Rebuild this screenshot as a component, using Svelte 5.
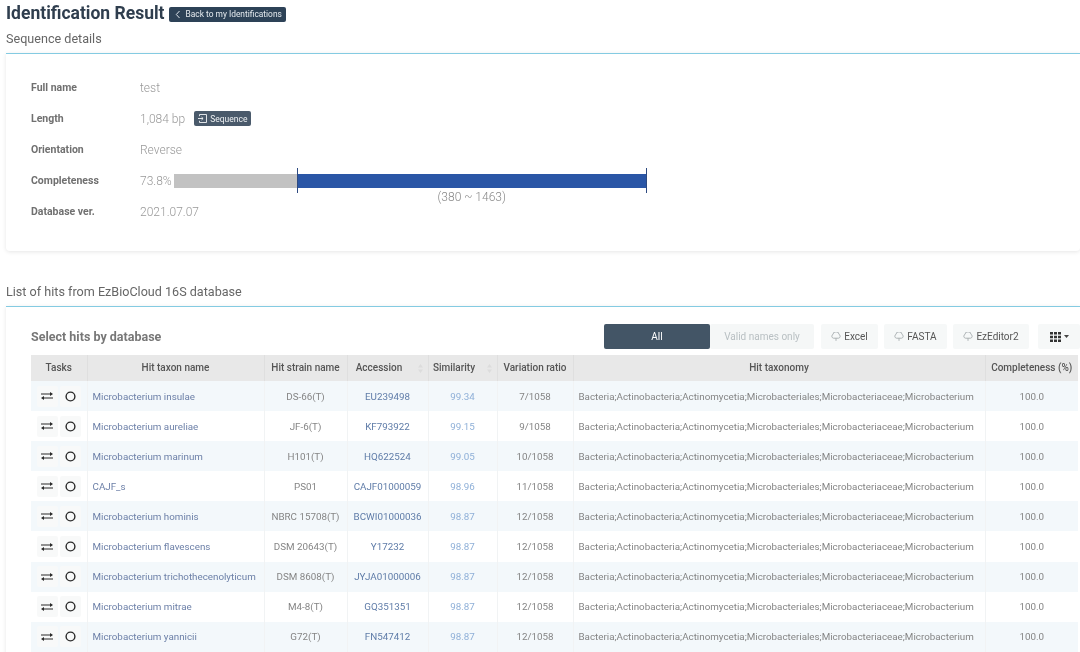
<script>
  const details = [
    { label: 'Full name', value: 'test' },
    { label: 'Length', value: '1,084 bp', button: true },
    { label: 'Orientation', value: 'Reverse' },
    { label: 'Completeness', value: '73.8%', bar: true },
    { label: 'Database ver.', value: '2021.07.07' }
  ];
  const columns = [
    { t: 'Tasks' }, { t: 'Hit taxon name' }, { t: 'Hit strain name' }, { t: 'Accession', sort: true },
    { t: 'Similarity', sort: true }, { t: 'Variation ratio' }, { t: 'Hit taxonomy' }, { t: 'Completeness (%)' }
  ];
  const taxonomy = 'Bacteria;Actinobacteria;Actinomycetia;Microbacteriales;Microbacteriaceae;Microbacterium';
  const hits = [
    ['Microbacterium insulae', 'DS-66(T)', 'EU239498', '99.34', '7/1058'],
    ['Microbacterium aureliae', 'JF-6(T)', 'KF793922', '99.15', '9/1058'],
    ['Microbacterium marinum', 'H101(T)', 'HQ622524', '99.05', '10/1058'],
    ['CAJF_s', 'PS01', 'CAJF01000059', '98.96', '11/1058'],
    ['Microbacterium hominis', 'NBRC 15708(T)', 'BCWI01000036', '98.87', '12/1058'],
    ['Microbacterium flavescens', 'DSM 20643(T)', 'Y17232', '98.87', '12/1058'],
    ['Microbacterium trichothecenolyticum', 'DSM 8608(T)', 'JYJA01000006', '98.87', '12/1058'],
    ['Microbacterium mitrae', 'M4-8(T)', 'GQ351351', '98.87', '12/1058'],
    ['Microbacterium yannicii', 'G72(T)', 'FN547412', '98.87', '12/1058']
  ];
  const tools = [
    { t: 'Excel', w: 57 },
    { t: 'FASTA', w: 63 },
    { t: 'EzEditor2', w: 76 }
  ];
</script>

<div class="page">
  <header class="title-row">
    <h1>Identification Result</h1>
    <button class="back">
      <svg width="6" height="9" viewBox="0 0 6 9"><path d="M4.500 1 1.300 4.500 4.500 8" fill="none" stroke="#dfe6ec" stroke-width="1"/></svg>
      Back to my Identifications
    </button>
  </header>

  <h2 class="first">Sequence details</h2>
  <section class="card details">
    {#each details as d}
      <div class="row">
        <div class="label">{d.label}</div>
        <div class="value">{d.value}</div>
        {#if d.button}
          <button class="seq">
            <svg width="9" height="9" viewBox="0 0 9 9"><path d="M1.500 2.200V.5h7v8h-7V6.800M0 4.500h5M3.500 3l1.600 1.500L3.500 6" fill="none" stroke="#f2f4f6" stroke-width=".9"/></svg>
            Sequence
          </button>
        {/if}
        {#if d.bar}
          <div class="bar">
            <div class="grey"></div>
            <div class="blue"><span class="caption">(380 ~ 1463)</span></div>
          </div>
        {/if}
      </div>
    {/each}
  </section>

  <h2 class="second">List of hits from EzBioCloud 16S database</h2>
  <section class="card hits">
    <div class="toolbar">
      <h3>Select hits by database</h3>
      <div class="tools">
        <div class="segment">
          <span class="seg on">All</span>
          <span class="seg off">Valid names only</span>
        </div>
        {#each tools as t}
          <button class="tool" style="width:{t.w}px">
            <svg width="10" height="9" viewBox="0 0 10 9"><path d="M2.500 6.200A2 2 0 0 1 2 2.400 3 2.600 0 0 1 8 2.400 2 2 0 0 1 7.500 6.200H2.500zM5 6.200V8.800" fill="none" stroke="#a5abae" stroke-width=".9"/></svg>
            {t.t}
          </button>
        {/each}
        <button class="tool grid-btn" aria-label="Columns">
          <svg width="11" height="10" viewBox="0 0 11 10"><path fill="#333" d="M0 0h3v2.600H0zM4 0h3v2.600H4zM8 0h3v2.600H8zM0 3.700h3v2.600H0zM4 3.700h3v2.600H4zM8 3.700h3v2.600H8zM0 7.400h3V10H0zM4 7.400h3V10H4zM8 7.400h3V10H8z"/></svg>
          <svg width="5" height="3" viewBox="0 0 5 3"><path fill="#444" d="M0 0h5L2.500 3z"/></svg>
        </button>
      </div>
    </div>

    <table>
      <colgroup>
        <col style="width:56px" /><col style="width:177px" /><col style="width:83px" /><col style="width:81px" />
        <col style="width:69px" /><col style="width:76px" /><col style="width:412px" /><col style="width:93px" />
      </colgroup>
      <thead>
        <tr>
          {#each columns as c}
            <th class:sortable={c.sort}>
              {c.t}
              {#if c.sort}
                <svg class="sort" width="5" height="9" viewBox="0 0 5 9"><path fill="#dcdcdc" d="M2.500 0 5 3.500H0zM2.500 9 0 5.500h5z"/></svg>
              {/if}
            </th>
          {/each}
        </tr>
      </thead>
      <tbody>
        {#each hits as h}
          <tr>
            <td class="tasks">
              <div class="task-btns">
                <span class="task">
                  <svg width="12" height="8" viewBox="0 0 12 8"><path fill="#2a2a2a" d="M0 1.400h9V0l3 2-3 2V2.600H0zM12 5.400H3V4L0 6l3 2V6.600h9z"/></svg>
                </span>
                <span class="task">
                  <svg width="11" height="11" viewBox="0 0 11 11"><circle cx="5.500" cy="5.500" r="4.400" fill="none" stroke="#2a2a2a" stroke-width="1.400"/></svg>
                </span>
              </div>
            </td>
            <td class="name">{h[0]}</td>
            <td>{h[1]}</td>
            <td class="acc">{h[2]}</td>
            <td class="sim">{h[3]}</td>
            <td>{h[4]}</td>
            <td class="tax">{taxonomy}</td>
            <td>100.0</td>
          </tr>
        {/each}
      </tbody>
    </table>
  </section>
</div>

<style>
  :global(body) {
    margin: 0;
    background: #fff;
    overflow: hidden;
  }
  .page {
    width: 1080px;
    height: 652px;
    overflow: hidden;
    box-sizing: border-box;
    padding: 0 0 0 6px;
    font-family: Roboto, "Liberation Sans", sans-serif;
    color: #888;
    will-change: transform;
  }
  .title-row {
    display: flex;
    align-items: center;
    gap: 4px;
    height: 25px;
  }
  h1 {
    margin: 0;
    font-size: 17.500px;
    font-weight: 700;
    color: #2f3e4e;
    white-space: nowrap;
  }
  .back {
    display: flex;
    align-items: center;
    gap: 5px;
    height: 15px;
    padding: 0 4px 0 6px;
    margin-top: 3px;
    border: 0;
    border-radius: 2px;
    background: #2d4257;
    color: #e6ebef;
    font: 400 8.400px Roboto, sans-serif;
  }
  h2 {
    margin: 0;
    font-size: 12.600px;
    font-weight: 400;
    color: #666;
    line-height: 15px;
  }
  h2.first {
    padding: 6px 0 7px;
  }
  h2.second {
    margin-top: 33px;
    padding: 0 0 7px;
  }
  .card {
    background: #fff;
    border-top: 1px solid #84cbe2;
    border-radius: 0 0 4px 4px;
    box-shadow: 0 1px 4px rgba(0, 0, 0, 0.1);
  }
  .details {
    height: 198px;
    box-sizing: border-box;
    padding: 18px 0 0 25px;
  }
  .row {
    display: flex;
    align-items: center;
    height: 31px;
    font-size: 12px;
  }
  .label {
    width: 109px;
    font-size: 10.500px;
    font-weight: 700;
    color: #707070;
  }
  .value {
    color: #999;
    font-weight: 300;
    white-space: nowrap;
  }
  .seq {
    display: flex;
    align-items: center;
    gap: 3px;
    height: 15px;
    margin-left: 9px;
    padding: 0 4px;
    border: 0;
    border-radius: 2px;
    background: #4a5a6b;
    color: #eef1f3;
    font: 400 8.500px Roboto, sans-serif;
  }
  .bar {
    display: flex;
    height: 14px;
    margin-left: 2px;
  }
  .grey {
    width: 123px;
    background: #c2c2c2;
  }
  .blue {
    position: relative;
    width: 350px;
    background: #2a56a6;
    border: solid #2e4a80;
    border-width: 0 1px;
    box-sizing: border-box;
  }
  .blue::before,
  .blue::after {
    content: "";
    position: absolute;
    top: -6px;
    bottom: -5px;
    width: 1px;
    background: #2e4a80;
  }
  .blue::before {
    left: -1px;
  }
  .blue::after {
    right: -1px;
  }
  .caption {
    position: absolute;
    top: 16px;
    left: 0;
    right: 0;
    text-align: center;
    font-size: 12px;
    font-weight: 300;
    color: #888;
  }
  .hits {
    height: 401px;
    box-sizing: border-box;
    padding: 0 0 0 25px;
  }
  .toolbar {
    display: flex;
    align-items: center;
    justify-content: space-between;
    padding: 17px 0 6px;
  }
  h3 {
    margin: 0 0 1px;
    font-size: 12.500px;
    font-weight: 700;
    color: #777;
  }
  .tools {
    display: flex;
    height: 25px;
  }
  .segment {
    display: flex;
    margin-right: 7px;
    font-size: 10px;
  }
  .seg {
    display: flex;
    align-items: center;
    justify-content: center;
    border-radius: 2px;
  }
  .on {
    width: 106px;
    background: #435566;
    color: #fff;
  }
  .off {
    width: 104px;
    background: #f5f7f7;
    color: #b8bfc2;
  }
  .tool {
    display: flex;
    align-items: center;
    justify-content: center;
    gap: 3px;
    border: 0;
    margin-right: 6px;
    background: #f6f8f8;
    border-radius: 2px;
    color: #555;
    font: 400 10px Roboto, sans-serif;
    padding: 0;
  }
  .tool:nth-of-type(3) {
    margin-right: 9px;
  }
  .grid-btn {
    width: 42px;
    margin-right: 0;
  }
  table {
    width: 1047px;
    table-layout: fixed;
    border-collapse: collapse;
    font-size: 9.800px;
  }
  th {
    height: 26px;
    padding: 0 0 1px;
    box-sizing: border-box;
    background: #e8e8e8;
    border-left: 1px solid #dfdfdf;
    color: #555;
    font-size: 10px;
    font-weight: 500;
    white-space: nowrap;
  }
  th.sortable {
    position: relative;
    padding-right: 17px;
  }
  .sort {
    position: absolute;
    right: 5px;
    top: 9px;
  }
  th:first-child {
    border-left: 0;
  }
  td {
    height: 30.100px;
    padding: 0;
    box-sizing: border-box;
    text-align: center;
    color: #858585;
    border-left: 1px solid #f1f3f4;
    white-space: nowrap;
  }
  td:first-child {
    border-left: 0;
  }
  tbody tr:nth-child(odd) td {
    background: #f3f8fb;
  }
  .task-btns {
    display: flex;
    justify-content: center;
    gap: 2px;
  }
  .task {
    display: flex;
    align-items: center;
    justify-content: center;
    width: 21px;
    height: 21px;
    background: #f8f9f9;
    border-radius: 2px;
  }
  td.name {
    text-align: left;
    padding-left: 5px;
    color: #6d80a8;
  }
  td.acc {
    color: #5f7ca8;
  }
  td.sim {
    color: #8fb0d8;
  }
  td.tax {
    text-align: left;
    padding-left: 5px;
    overflow: hidden;
  }
</style>
